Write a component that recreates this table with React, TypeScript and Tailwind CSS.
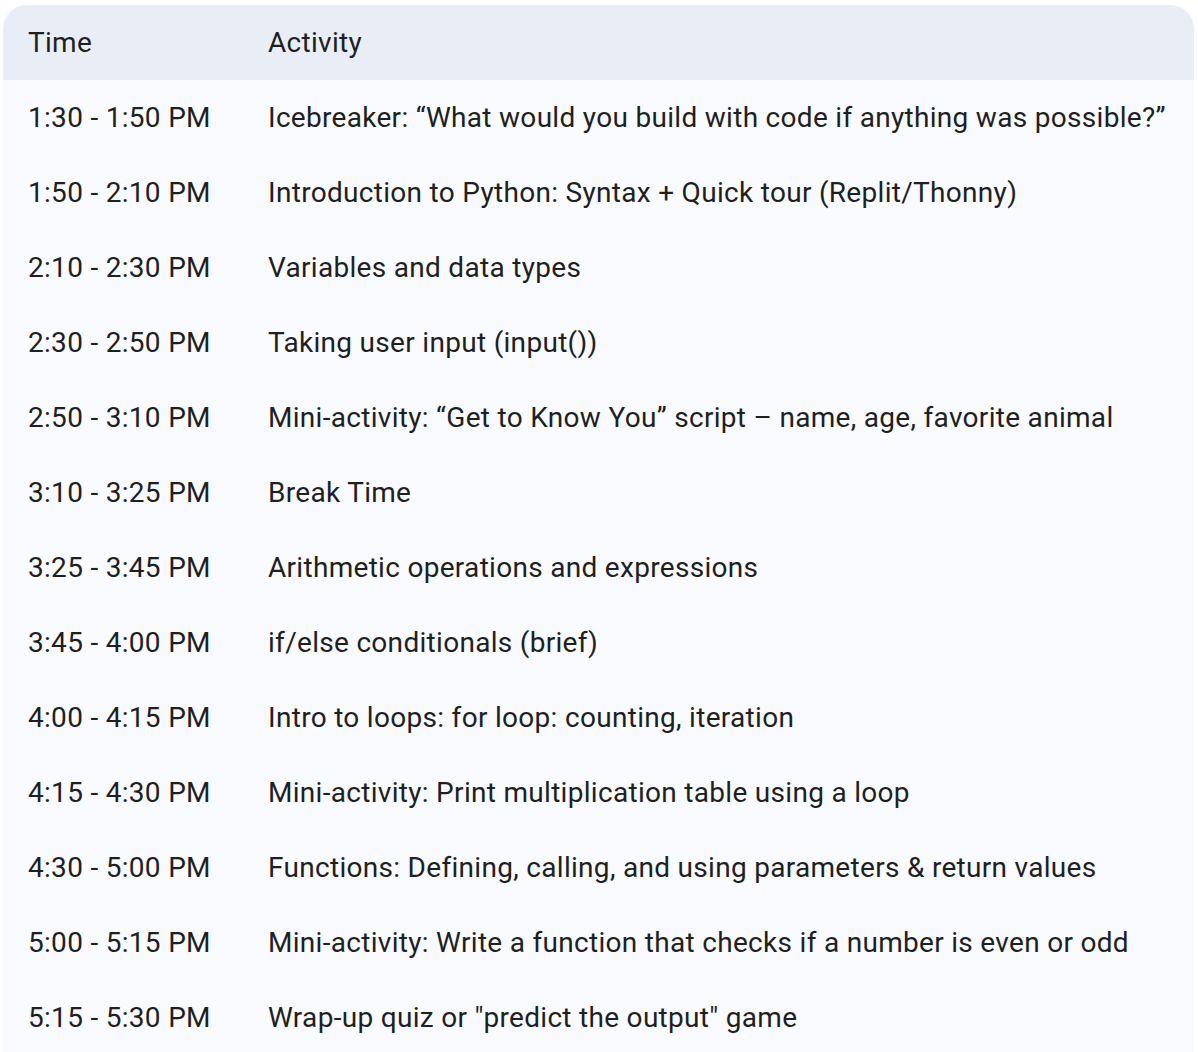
const rows: [string, string][] = [
  ["1:30 - 1:50 PM", "Icebreaker: \u201cWhat would you build with code if anything was possible?\u201d"],
  ["1:50 - 2:10 PM", "Introduction to Python: Syntax + Quick tour (Replit/Thonny)"],
  ["2:10 - 2:30 PM", "Variables and data types"],
  ["2:30 - 2:50 PM", "Taking user input (input())"],
  ["2:50 - 3:10 PM", "Mini-activity: \u201cGet to Know You\u201d script \u2013 name, age, favorite animal"],
  ["3:10 - 3:25 PM", "Break Time"],
  ["3:25 - 3:45 PM", "Arithmetic operations and expressions"],
  ["3:45 - 4:00 PM", "if/else conditionals (brief)"],
  ["4:00 - 4:15 PM", "Intro to loops: for loop: counting, iteration"],
  ["4:15 - 4:30 PM", "Mini-activity: Print multiplication table using a loop"],
  ["4:30 - 5:00 PM", "Functions: Defining, calling, and using parameters & return values"],
  ["5:00 - 5:15 PM", "Mini-activity: Write a function that checks if a number is even or odd"],
  ["5:15 - 5:30 PM", "Wrap-up quiz or \"predict the output\" game"],
];

export default function App() {
  return (
    <div className="min-h-screen bg-white pt-[5px] pl-[3px] font-['Roboto',_'Liberation_Sans',_sans-serif]">
      <div className="w-[1191px] overflow-hidden rounded-t-[24px] bg-[#f8fafd] text-[#1f1f1f]">
        <table className="w-full border-collapse text-left text-[28px] tracking-[0.3px]">
          <thead>
            <tr className="h-[75px] bg-[#e9eef6]">
              <th className="w-[265px] px-[25px] font-normal">Time</th>
              <th className="px-0 font-normal">Activity</th>
            </tr>
          </thead>
          <tbody>
            {rows.map(([time, activity]) => (
              <tr key={time} className="h-[75px]">
                <td className="px-[25px] whitespace-nowrap">{time}</td>
                <td className="whitespace-nowrap">{activity}</td>
              </tr>
            ))}
          </tbody>
        </table>
      </div>
    </div>
  );
}
